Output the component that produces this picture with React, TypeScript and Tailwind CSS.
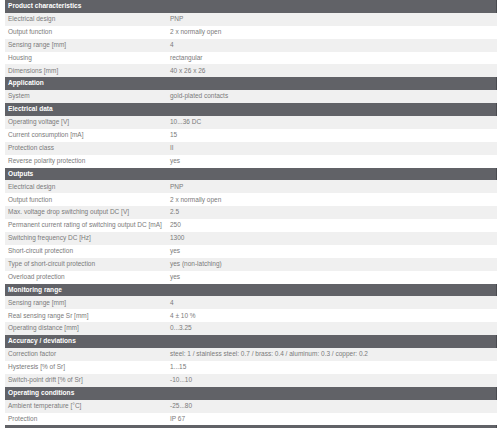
import React from "react";

type Section = { title: string; rows: [string, string][] };

const data: Section[] = [
  {
    title: "Product characteristics",
    rows: [
      ["Electrical design", "PNP"],
      ["Output function", "2 x normally open"],
      ["Sensing range [mm]", "4"],
      ["Housing", "rectangular"],
      ["Dimensions [mm]", "40 x 26 x 26"],
    ],
  },
  { title: "Application", rows: [["System", "gold-plated contacts"]] },
  {
    title: "Electrical data",
    rows: [
      ["Operating voltage [V]", "10...36 DC"],
      ["Current consumption [mA]", "15"],
      ["Protection class", "II"],
      ["Reverse polarity protection", "yes"],
    ],
  },
  {
    title: "Outputs",
    rows: [
      ["Electrical design", "PNP"],
      ["Output function", "2 x normally open"],
      ["Max. voltage drop switching output DC [V]", "2.5"],
      ["Permanent current rating of switching output DC [mA]", "250"],
      ["Switching frequency DC [Hz]", "1300"],
      ["Short-circuit protection", "yes"],
      ["Type of short-circuit protection", "yes (non-latching)"],
      ["Overload protection", "yes"],
    ],
  },
  {
    title: "Monitoring range",
    rows: [
      ["Sensing range [mm]", "4"],
      ["Real sensing range Sr [mm]", "4 ± 10 %"],
      ["Operating distance [mm]", "0...3.25"],
    ],
  },
  {
    title: "Accuracy / deviations",
    rows: [
      ["Correction factor", "steel: 1 / stainless steel: 0.7 / brass: 0.4 / aluminum: 0.3 / copper: 0.2"],
      ["Hysteresis [% of Sr]", "1...15"],
      ["Switch-point drift [% of Sr]", "-10...10"],
    ],
  },
  {
    title: "Operating conditions",
    rows: [
      ["Ambient temperature [°C]", "-25...80"],
      ["Protection", "IP 67"],
    ],
  },
  { title: "", rows: [] },
];

export default function App() {
  return (
    <div
      className="w-[500px] h-[428px] overflow-hidden bg-white"
      style={{ fontFamily: '"Liberation Sans", Arial, sans-serif' }}
    >
      <div className="ml-[5px] w-[492px] flex flex-col">
        {data.map((s, si) => (
          <div key={si} className="flex flex-col">
            <div className="h-[12.9px] bg-[#616267] border-r border-[#4a4b50] flex items-center pl-[3px] text-white font-bold text-[6.6px] leading-none whitespace-nowrap">
              {s.title}
            </div>
            {s.rows.map(([k, v], ri) => (
              <div
                key={ri}
                className={`h-[12.9px] grid grid-cols-[165px_1fr] items-center text-[6.5px] leading-none text-[#7a7a7a] whitespace-nowrap ${
                  ri % 2 === 0 ? "bg-[#f0f0f0]" : "bg-white"
                }`}
              >
                <div className="pl-[3px]">{k}</div>
                <div>{v}</div>
              </div>
            ))}
          </div>
        ))}
      </div>
    </div>
  );
}
